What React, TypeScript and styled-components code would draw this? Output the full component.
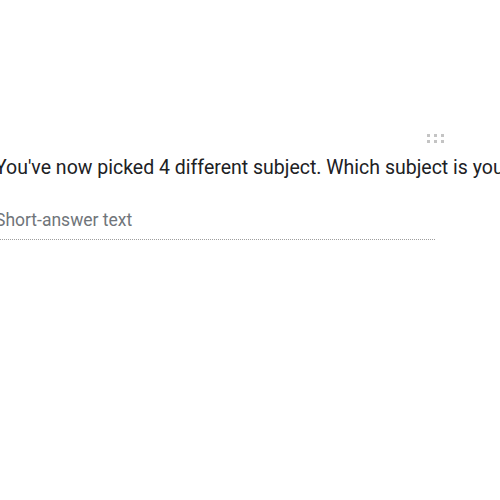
import styled, { createGlobalStyle } from 'styled-components'

const GlobalStyle = createGlobalStyle`
  html, body {
    margin: 0;
    padding: 0;
    background: #fff;
    overflow: hidden;
  }
  body {
    font-family: Roboto, "Liberation Sans", Arial, sans-serif;
  }
`

const Page = styled.div`
  width: 500px;
  height: 500px;
  overflow: hidden;
  background: #fff;
`

const Card = styled.div`
  display: flex;
  flex-direction: column;
  margin-left: -5px;
  padding-top: 134px;
  width: 880px;
`

const HandleRow = styled.div`
  display: flex;
  width: 880px;
  justify-content: center;
  height: 8px;
`

const Handle = styled.div`
  display: grid;
  grid-template-columns: repeat(3, 3px);
  grid-auto-rows: 3px;
  gap: 3px 4px;
  & span {
    width: 3px;
    height: 3px;
    background: #c4c4c4;
  }
`

const Question = styled.div`
  margin-top: 13px;
  font-size: 19.5px;
  line-height: 26px;
  color: #202124;
  white-space: nowrap;
`

const Answer = styled.div`
  margin-top: 28px;
  width: 440px;
  font-size: 17.5px;
  line-height: 22px;
  color: #70757a;
  padding-bottom: 8px;
  border-bottom: 1px dotted #9e9e9e;
`

export default function App() {
  return (
    <Page>
      <GlobalStyle />
      <Card>
        <HandleRow>
          <Handle>
            {Array.from({ length: 6 }).map((_, i) => (
              <span key={i} />
            ))}
          </Handle>
        </HandleRow>
        <Question>
          You've now picked 4 different subject. Which subject is your favourite?
        </Question>
        <Answer>Short-answer text</Answer>
      </Card>
    </Page>
  )
}
